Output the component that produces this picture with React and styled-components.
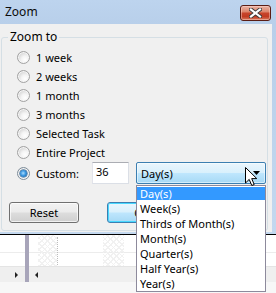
import React from 'react';
import styled, { createGlobalStyle, css } from 'styled-components';

const GlobalStyle = createGlobalStyle`
  html, body { margin: 0; padding: 0; background: #fff; }
  body {
    font-family: "Noto Sans", "Open Sans", sans-serif;
    font-size: 11px;
    color: #000;
  }
  * { box-sizing: border-box; }
`;

const Page = styled.div`
  position: relative;
  width: 276px;
  height: 293px;
  overflow: hidden;
  background: #fff;
`;

const Dialog = styled.div`
  display: flex;
  flex-direction: column;
  height: 235px;
  background: linear-gradient(#bdd4ee, #b8cfea 24px, #c3d8ef);
  border-bottom: 1px solid #000;
`;

const TitleBar = styled.div`
  display: flex;
  align-items: center;
  justify-content: space-between;
  height: 24px;
  padding: 0 5px 0 5px;
`;

const Title = styled.span`
  font-size: 12px;
  line-height: 14px;
  color: #0b0b0b;
`;

const CloseButton = styled.div`
  width: 31px;
  height: 16px;
  margin-top: 2px;
  border: 1px solid #5a1d14;
  border-radius: 3px;
  background: linear-gradient(#eab3a4, #dd876e 40%, #c7442b 52%, #c13b22 75%, #d8795c);
  box-shadow: inset 0 0 0 1px rgba(255, 220, 210, 0.45);
  display: flex;
  align-items: center;
  justify-content: center;
`;

const Client = styled.div`
  flex: 1;
  margin: 0 4px 2px 0;
  background: #f0f0f0;
  padding: 6px 0 0 1px;
  display: flex;
  flex-direction: column;
`;

const GroupBox = styled.fieldset`
  margin: 0;
  padding: 0;
  width: 267px;
  height: 201px;
  border: 1px solid #d5dfe5;
  border-radius: 3px;
  min-width: 0;
`;

const Legend = styled.legend`
  padding: 0 2px;
  margin-left: 6px;
  line-height: 14px;
  font-size: 12px;
`;

const Body = styled.div`
  display: flex;
  flex-direction: column;
  padding-top: 4px;
`;

const OptionList = styled.div`
  display: flex;
  flex-direction: column;
  padding-left: 15px;
`;

const Option = styled.div`
  display: flex;
  align-items: center;
  gap: 6px;
  height: ${p => p.$h || 19}px;
  width: ${p => (p.$w ? `${p.$w}px` : 'auto')};
  flex: none;
  white-space: nowrap;
  font-size: 12px;
  line-height: 15px;
`;

const Radio = styled.span`
  position: relative;
  width: 13px;
  height: 13px;
  flex: none;
  border-radius: 50%;
  border: 1px solid #a2a2a2;
  background: radial-gradient(circle at 65% 70%, #ffffff 0, #f4f4f4 35%, #d4d4d4 75%, #c4c4c4 100%);
  box-shadow: inset 0 0 0 1px #f6f6f6;
  ${p => p.$checked && css`
    border-color: #7d8c99;
    &::after {
      content: '';
      position: absolute;
      left: 2px;
      top: 2px;
      width: 7px;
      height: 7px;
      border-radius: 50%;
      background: radial-gradient(circle at 45% 45%, #a9dcff 0, #3b97e0 45%, #0d4b8a 100%);
      box-shadow: 0 0 0 0.5px #164f84;
    }
  `}
`;

const OptionText = styled.span`
  font-size: 11px;
`;

const CustomRow = styled.div`
  display: flex;
  align-items: center;
  height: 22px;
  padding-left: 15px;
`;

const NumberBox = styled.div`
  width: 37px;
  height: 22px;
  flex: none;
  background: #fff;
  border: 1px solid #dbdfe6;
  border-top-color: #abadb3;
  border-left-color: #e2e3ea;
  padding: 2px 0 0 3px;
  line-height: 14px;
`;

const ComboWrap = styled.div`
  position: relative;
  margin-left: 7px;
  width: 130px;
  flex: none;
`;

const Combo = styled.div`
  display: flex;
  align-items: center;
  justify-content: space-between;
  height: 22px;
  padding: 0 4px 0 4px;
  border: 1px solid #3c7fb1;
  border-radius: 2px;
  background: linear-gradient(#eaf6fd, #d9f0fc 48%, #bee6fd 52%, #a7d9f5);
  box-shadow: inset 0 0 0 1px rgba(255, 255, 255, 0.5);
`;

const DropList = styled.ul`
  position: absolute;
  top: 23px;
  left: 0;
  width: 130px;
  margin: 0;
  padding: 0;
  list-style: none;
  background: #fff;
  border: 1px solid #8d8a9c;
  z-index: 2;
`;

const DropItem = styled.li`
  height: 15px;
  line-height: 15px;
  padding-left: 3px;
  white-space: nowrap;
  ${p => p.$selected && css`
    background: linear-gradient(#fff 0, #fff 1px, #3399ff 1px, #3399ff 14px, #fff 14px);
    color: #fff;
  `}
`;

const ButtonRow = styled.div`
  display: flex;
  gap: 28px;
  margin-top: 18px;
  padding-left: 7px;
`;

const Button = styled.div`
  width: 70px;
  height: 21px;
  display: flex;
  align-items: center;
  justify-content: center;
  border: 1px solid #707070;
  border-radius: 3px;
  background: linear-gradient(#f2f2f2, #ebebeb 48%, #dddddd 52%, #cfcfcf);
  box-shadow: inset 0 0 0 1px rgba(255, 255, 255, 0.7);
  ${p => p.$default && css`
    border-color: #3c7fb1;
    box-shadow: inset 0 0 0 1px #48d8ff;
    background: linear-gradient(#eaf6fd, #d9f0fc 48%, #bee6fd 52%, #a7d9f5);
  `}
`;

const Gantt = styled.div`
  display: grid;
  grid-template-columns: 25px 4px 1fr;
  grid-template-rows: 31px 16px 1fr;
  height: 58px;
`;

const ChartPane = styled.div`
  display: flex;
  background: linear-gradient(to bottom, transparent 17px, #ececec 17px, #ececec 18px, transparent 18px);
`;

const Splitter = styled.div`
  grid-row: 1 / span 2;
  grid-column: 2;
  background: #a8a5ba;
`;

const Spacer = styled.div`
  width: ${p => p.$w}px;
  flex: none;
`;

const Hatch = styled.div`
  width: ${p => p.$w}px;
  flex: none;
  background:
    repeating-linear-gradient(45deg, #f1f1f1 0 1px, transparent 1px 4px),
    repeating-linear-gradient(-45deg, #f1f1f1 0 1px, transparent 1px 4px);
`;

const DottedLine = styled.div`
  width: 1px;
  flex: none;
  margin: 2px 0 1px;
  border-left: 1px dotted #bcbcbc;
`;

const Band = styled.div`
  display: flex;
  align-items: center;
  padding-left: ${p => p.$pad}px;
  background: #efefef;
  border-top: 1px solid #e4e4e4;
`;

const Arrow = styled.span`
  width: 0;
  height: 0;
  border-top: 3px solid transparent;
  border-bottom: 3px solid transparent;
  ${p => (p.$dir === 'right'
    ? css`border-left: 3px solid #222;`
    : css`border-right: 3px solid #222;`)}
`;

const StatusStrip = styled.div`
  grid-column: 1 / -1;
  background: #f7f7f7;
`;

const Cursor = styled.svg`
  position: absolute;
  left: 245px;
  top: 167px;
  z-index: 5;
`;

const options = ['1 week', '2 weeks', '1 month', '3 months', 'Selected Task', 'Entire Project'];
const units = ['Day(s)', 'Week(s)', 'Thirds of Month(s)', 'Month(s)', 'Quarter(s)', 'Half Year(s)', 'Year(s)'];

export default function App() {
  return (
    <Page>
      <GlobalStyle />
      <Dialog>
        <TitleBar>
          <Title>Zoom</Title>
          <CloseButton>
            <svg width="13" height="10" viewBox="0 0 13 10">
              <path d="M2 1.5 L11 8.5 M11 1.5 L2 8.5" stroke="#3a3a3a" strokeWidth="4" strokeLinecap="square" />
              <path d="M2 1.5 L11 8.5 M11 1.5 L2 8.5" stroke="#fff" strokeWidth="2.2" strokeLinecap="square" />
            </svg>
          </CloseButton>
        </TitleBar>
        <Client>
          <GroupBox>
            <Legend>Zoom to</Legend>
            <Body>
              <OptionList>
                {options.map(o => (
                  <Option key={o}>
                    <Radio />
                    <OptionText>{o}</OptionText>
                  </Option>
                ))}
              </OptionList>
              <CustomRow>
                <Option $w={75} $h={22}>
                  <Radio $checked />
                  <OptionText>Custom:</OptionText>
                </Option>
                <NumberBox>36</NumberBox>
                <ComboWrap>
                  <Combo>
                    <span>Day(s)</span>
                    <svg width="8" height="5" viewBox="0 0 8 5">
                      <path d="M0 0 H7 L3.5 4 Z" fill="#000" />
                    </svg>
                  </Combo>
                  <DropList>
                    {units.map((u, i) => (
                      <DropItem key={u} $selected={i === 0}>{u}</DropItem>
                    ))}
                  </DropList>
                </ComboWrap>
              </CustomRow>
              <ButtonRow>
                <Button>Reset</Button>
                <Button $default>OK</Button>
              </ButtonRow>
            </Body>
          </GroupBox>
        </Client>
      </Dialog>
      <Gantt>
        <ChartPane />
        <Splitter />
        <ChartPane>
          <Spacer $w={9} />
          <Hatch $w={19} />
          <DottedLine />
          <Spacer $w={45} />
          <Hatch $w={21} />
        </ChartPane>
        <Band $pad={15}><Arrow $dir="right" /></Band>
        <Band $pad={6}><Arrow $dir="left" /></Band>
        <StatusStrip />
      </Gantt>
      <Cursor width="13" height="20" viewBox="0 0 13 20">
        <path d="M0.5 0.5 L0.5 16 L4.2 12.4 L6.8 18.5 L9.2 17.5 L6.7 11.6 L11.8 11.6 Z" fill="#fff" stroke="#000" strokeWidth="1" strokeLinejoin="miter" />
      </Cursor>
    </Page>
  );
}
